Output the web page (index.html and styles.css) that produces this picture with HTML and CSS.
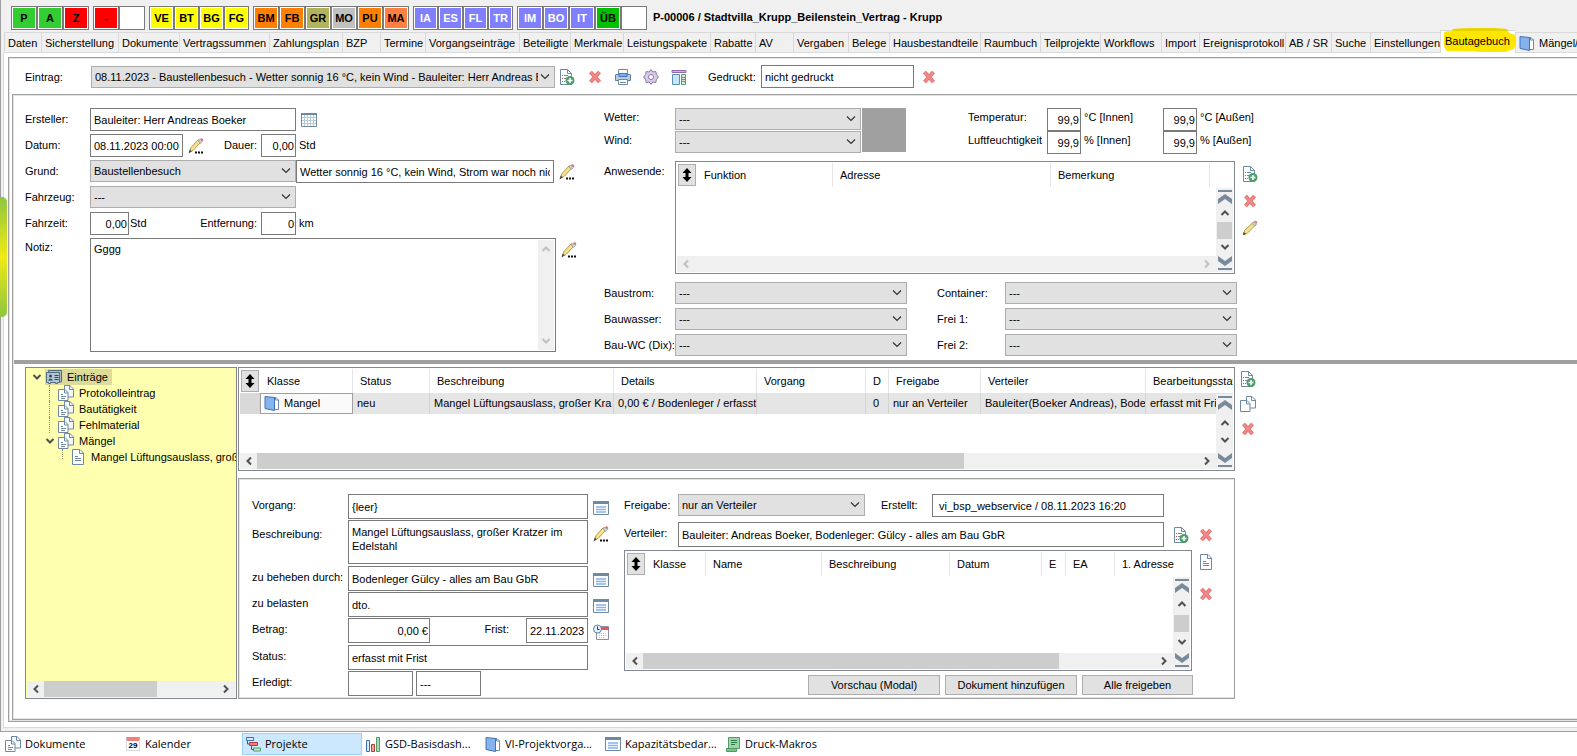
FILE: index.html
```html
<!DOCTYPE html>
<html lang="de">
<head>
    <meta charset="UTF-8">
    <meta name="viewport" content="width=device-width, initial-scale=1.0">
    <title>P-00006 / Bautagebuch</title>
    <link rel="stylesheet" href="styles.css">
</head>
<body>

<!-- Symbole -->
<svg class="sprite" aria-hidden="true">
    <symbol id="i-add" viewBox="0 0 16 16">
        <path d="M1.500 .5h7l4 4v11h-11z" fill="#fff" stroke="#6f8aa0"/>
        <path d="M8.500 .5v4h4" fill="none" stroke="#6f8aa0"/>
        <path d="M3 6.500h1M3 9.500h1M3 12.500h1" stroke="#c0504d"/>
        <path d="M5 6.500h4M5 9.500h2M5 12.500h1" stroke="#6f8aa0"/>
        <circle cx="11" cy="11.500" r="4.500" fill="#4e9e6c"/>
        <path d="M8.500 11.500h5M11 9v5" stroke="#fff" stroke-width="1.500"/>
    </symbol>
    <symbol id="i-del" viewBox="0 0 16 16">
        <path d="M3.500 3l9 10M12.500 3l-9 10" stroke="#e66f6f" stroke-width="4"/>
        <path d="M3.500 3l9 10M12.500 3l-9 10" stroke="#f08a88" stroke-width="2"/>
    </symbol>
    <symbol id="i-print" viewBox="0 0 16 16">
        <path d="M3.500 5V.5h9V5" fill="#fff" stroke="#6f8aa0"/>
        <path d="M1 5.500h14a.5.500 0 0 1 .5.500v5.500H.5V6a.5.500 0 0 1 .5-.5z" fill="#b9cbe0" stroke="#5f7f9f"/>
        <path d="M4 4.500h8v3H4z" fill="#7fb0ea" stroke="#4a76b8"/>
        <path d="M3.500 10.500h9v5h-9z" fill="#fff" stroke="#6f8aa0"/>
        <path d="M5 13.500h6" stroke="#6f8aa0"/>
    </symbol>
    <symbol id="i-gear" viewBox="0 0 16 16">
        <path d="M8 .6l1.800 2.400 3-.5.600 3L15.400 8l-2 2.500-.6 3-3-.5L8 15.400 6.200 13l-3 .5-.6-3L.6 8l2-2.500.6-3 3 .5z" fill="#d9cce8" stroke="#8d76aa"/>
        <circle cx="8" cy="8" r="2.500" fill="#fff" stroke="#8d76aa"/>
    </symbol>
    <symbol id="i-layout" viewBox="0 0 16 16">
        <path d="M1 1.500h14v2H1z" fill="#c9b8dc" stroke="#8d6ba8"/>
        <path d="M1.500 5.500h7v10h-7z" fill="#c5e6fb" stroke="#5b8fb5"/>
        <path d="M10.500 5.500h4v10h-4z" fill="#d4ecd9" stroke="#5c9e72"/>
        <path d="M11 8.500h3M11 10.500h3M11 12.500h3" stroke="#5c9e72"/>
    </symbol>
    <symbol id="i-grid" viewBox="0 0 16 16">
        <path d="M.5 1.500h15v13H.5z" fill="#fff" stroke="#6f8aa0"/>
        <path d="M0 2h16" stroke="#6f8aa0" stroke-width="2"/>
        <path d="M1 5.500h14M1 8.500h14M1 11.500h14M3.500 3v11M6.500 3v11M9.500 3v11M12.500 3v11" stroke="#b9cbd8"/>
    </symbol>
    <symbol id="i-pencil" viewBox="0 0 16 16">
        <path d="M1.500 14.500l1-4 9-8.500 2.500 2.500-9 9z" fill="#fbe08a" stroke="#a99a55"/>
        <path d="M10 3.500l2-2 2.500 2.500-2 2z" fill="#c3cad2" stroke="#8a929a" stroke-width=".6"/>
        <path d="M12 1.500q1.500-1.500 2.700-.3t.1 2.600z" fill="#e87070"/>
        <path d="M1 15l.8-3 2 2z" fill="#333"/>
    </symbol>
    <symbol id="i-pencil-dots" viewBox="0 0 16 16">
        <path d="M1.500 14l1.500-4.500 7.500-8L13 4l-8 8.500z" fill="#fbe08a" stroke="#a99a55"/>
        <path d="M10 3l2-2 2.500 2.500-2 2z" fill="#c3cad2" stroke="#8a929a" stroke-width=".6"/>
        <path d="M12 1q1.500-1.500 2.700-.3t.1 2.600z" fill="#e87070"/>
        <path d="M.5 15.500l1.200-4 2 2z" fill="#444"/>
        <path d="M7 13.500h2v2H7zM10 13.500h2v2h-2zM13 13.500h2v2h-2z" fill="#111"/>
    </symbol>
    <symbol id="i-book" viewBox="0 0 16 16">
        <path d="M8 2.500h4l2.500 2.500v9.500H8z" fill="#fff" stroke="#6f8aa0"/>
        <path d="M11.500 2.500V5h3" fill="none" stroke="#6f8aa0"/>
        <path d="M1 1.500l9.500 1v13L1 13.500z" fill="#86b2ee" stroke="#4472b4"/>
    </symbol>
    <symbol id="i-docs" viewBox="0 0 16 16">
        <path d="M6.500 .5h5.500l3.500 3.500v8h-9z" fill="#f3f8fd" stroke="#6f8aa0"/>
        <path d="M11.500 .5v4h4" fill="none" stroke="#6f8aa0"/>
        <path d="M.5 4.500H7l3 3v8H.5z" fill="#fff" stroke="#6f8aa0"/>
        <path d="M6.500 4.500v3.500H10M3 9.500h2M3 11.500h5M3 13.500h4" fill="none" stroke="#6f8aa0"/>
    </symbol>
    <symbol id="i-copy" viewBox="0 0 16 16">
        <path d="M6.500 .5h5.500l3.500 3.500v8h-9z" fill="#fff" stroke="#6f8aa0"/>
        <path d="M11.500 .5v4h4" fill="none" stroke="#6f8aa0"/>
        <path d="M.5 4.500H7l3 3v8H.5z" fill="#fff" stroke="#6f8aa0"/>
        <path d="M6.500 4.500v3.500H10" fill="none" stroke="#6f8aa0"/>
    </symbol>
    <symbol id="i-doc" viewBox="0 0 16 16">
        <path d="M2.500 .5H10l3.500 3.500v11.500h-11z" fill="#fff" stroke="#6f8aa0"/>
        <path d="M9.500 .5v4h4M5 7.500h3M5 9.500h6M5 11.500h6" fill="none" stroke="#6f8aa0"/>
    </symbol>
    <symbol id="i-contact" viewBox="0 0 16 16">
        <path d="M2.500 3V1.500h13V13H14" fill="#a9bccb" stroke="#4f6c84"/>
        <path d="M.5 3.500h13v10h-2v1h-2v-1h-5v1h-2v-1h-2z" fill="#b4c6d4" stroke="#4f6c84"/>
        <circle cx="4.500" cy="7" r="1.500" fill="#2f4a60"/>
        <path d="M2 11.500q2.500-4 5 0z" fill="#2f4a60"/>
        <path d="M8.500 6.500h4M8.500 8.500h4M8.500 10.500h4" stroke="#2f4a60"/>
    </symbol>
    <symbol id="i-form" viewBox="0 0 16 16">
        <path d="M.5 1.500h15v13H.5z" fill="#fff" stroke="#6f8aa0"/>
        <path d="M0 2.500h16" stroke="#6f8aa0" stroke-width="3"/>
        <path d="M3 7h10M3 9.500h10M3 12h10" stroke="#86b2ee" stroke-width="1.500"/>
    </symbol>
    <symbol id="i-due" viewBox="0 0 16 16">
        <path d="M3.500 2.500h12v13h-12z" fill="#fff" stroke="#8b8fa0"/>
        <path d="M8 3h8v3H8z" fill="#e05858"/>
        <path d="M6 9.500h8M6 11.500h8M6 13.500h6" stroke="#b6bccb" stroke-dasharray="1 1"/>
        <circle cx="4.500" cy="5" r="4" fill="#eaf2fc" stroke="#5b7fae"/>
        <path d="M4.500 2.500V5.500h2" fill="none" stroke="#333"/>
    </symbol>
    <symbol id="i-gantt" viewBox="0 0 16 16">
        <path d="M1.500 1.500h7v3h-7z" fill="#dbe8f8" stroke="#3c6eb4"/>
        <path d="M4.500 6.500h8v3h-8z" fill="#f08080" stroke="#b43c3c"/>
        <path d="M8.500 12h7v3h-7z" fill="#c4e6c8" stroke="#4e9e6c"/>
        <path d="M2.500 5v3h2M6.500 10v3.500h2" fill="none" stroke="#555"/>
    </symbol>
    <symbol id="i-bars" viewBox="0 0 16 16">
        <path d="M1.500 4.500h3v11h-3z" fill="#dbe8f8" stroke="#3c6eb4"/>
        <path d="M6.500 8.500h3v7h-3z" fill="#f6a0a0" stroke="#b43c3c"/>
        <path d="M11.500 1.500h3v14h-3z" fill="#a9dbb2" stroke="#4e9e6c"/>
    </symbol>
    <symbol id="i-macro" viewBox="0 0 16 16">
        <path d="M3.500 1.500h11v11h-11z" fill="#9fd3a8" stroke="#4e9e6c"/>
        <path d="M1.500 12.500h10v3h-10z" fill="#7cc08a" stroke="#4e9e6c"/>
        <path d="M6 4.500h6M6 6.500h6M6 8.500h4" stroke="#2f7a48"/>
    </symbol>
    <symbol id="i-sort" viewBox="0 0 10 16">
        <path d="M5 1l4.500 5h-3v4h3L5 15 .5 10h3V6h-3z" fill="#000"/>
    </symbol>
    <symbol id="i-up" viewBox="0 0 10 10"><path d="M1.500 7L5 3.500 8.500 7" fill="none" stroke="currentColor" stroke-width="2"/></symbol>
    <symbol id="i-down" viewBox="0 0 10 10"><path d="M1.500 3L5 6.500 8.500 3" fill="none" stroke="currentColor" stroke-width="2"/></symbol>
    <symbol id="i-left" viewBox="0 0 10 10"><path d="M7 1.500L3.500 5 7 8.500" fill="none" stroke="currentColor" stroke-width="2"/></symbol>
    <symbol id="i-right" viewBox="0 0 10 10"><path d="M3 1.500L6.500 5 3 8.500" fill="none" stroke="currentColor" stroke-width="2"/></symbol>
    <symbol id="i-first" viewBox="0 0 16 16">
        <path d="M1 1h14v2H1zM8 5l7 5v5l-7-5-7 5v-5z" fill="#7b8a9a"/>
    </symbol>
    <symbol id="i-last" viewBox="0 0 16 16">
        <path d="M1 13h14v2H1zM8 11l7-5V1L8 6 1 1v5z" fill="#7b8a9a"/>
    </symbol>
</svg>

<div class="window">
    <div class="edge-tab"></div>

    <header class="topbar">
        <div class="chips">
            <button class="chip green">P</button><button class="chip green">A</button><button class="chip red">Z</button>
        </div>
        <div class="chips">
            <button class="chip red">-</button><button class="chip" aria-label="leer"></button>
        </div>
        <div class="chips narrow">
            <button class="chip yellow">VE</button><button class="chip yellow">BT</button><button class="chip yellow">BG</button><button class="chip yellow">FG</button>
        </div>
        <div class="chips">
            <button class="chip orange">BM</button><button class="chip orange">FB</button><button class="chip olive">GR</button><button class="chip gray">MO</button><button class="chip orange">PU</button><button class="chip coral">MA</button>
        </div>
        <div class="chips narrow">
            <button class="chip blue">IA</button><button class="chip blue">ES</button><button class="chip blue">FL</button><button class="chip blue">TR</button>
        </div>
        <div class="chips">
            <button class="chip blue">IM</button><button class="chip blue">BO</button><button class="chip blue">IT</button><button class="chip darkgreen">ÜB</button><button class="chip" aria-label="leer"></button>
        </div>
        <h1 class="title">P-00006 / Stadtvilla_Krupp_Beilenstein_Vertrag - Krupp</h1>
    </header>

    <nav class="tabs">
        <a class="tab" href="#">Daten</a>
        <a class="tab" href="#">Sicherstellung</a>
        <a class="tab" href="#">Dokumente</a>
        <a class="tab" href="#">Vertragssummen</a>
        <a class="tab" href="#">Zahlungsplan</a>
        <a class="tab" href="#">BZP</a>
        <a class="tab" href="#">Termine</a>
        <a class="tab" href="#">Vorgangseinträge</a>
        <a class="tab" href="#">Beteiligte</a>
        <a class="tab" href="#">Merkmale</a>
        <a class="tab" href="#">Leistungspakete</a>
        <a class="tab" href="#">Rabatte</a>
        <a class="tab" href="#">AV</a>
        <a class="tab" href="#">Vergaben</a>
        <a class="tab" href="#">Belege</a>
        <a class="tab" href="#">Hausbestandteile</a>
        <a class="tab" href="#">Raumbuch</a>
        <a class="tab" href="#">Teilprojekte</a>
        <a class="tab" href="#">Workflows</a>
        <a class="tab" href="#">Import</a>
        <a class="tab" href="#">Ereignisprotokoll</a>
        <a class="tab" href="#">AB / SR</a>
        <a class="tab" href="#">Suche</a>
        <a class="tab" href="#">Einstellungen</a>
        <a class="tab active" href="#">
            <svg class="marker" viewBox="0 0 73 25" aria-hidden="true"><path d="M1 5Q1 3 9 3L10 1Q40-1 64 1L66 5 72 7Q74 14 71 21L62 24 40 24 24 23 4 23Q0 20 1 12z" fill="#ffe600"/><path d="M9 3L10 1Q40-1 64 1L65 3z" fill="#e6d300"/></svg>
            <span class="tab-text">Bautagebuch</span>
        </a>
        <a class="tab" href="#"><svg class="icon"><use href="#i-book"/></svg>Mängel/Fristen</a>
    </nav>

    <main class="page">
        <div class="frame outer">

            <!-- Eintragsauswahl -->
            <div class="entry-bar">
                <label class="entry-label" for="eintrag">Eintrag:</label>
                <select class="entry-select" id="eintrag"><option>08.11.2023 - Baustellenbesuch - Wetter sonnig 16 °C, kein Wind - Bauleiter: Herr Andreas B</option></select>
                <div class="entry-tools">
                    <button class="tool" aria-label="Neu"><svg class="icon"><use href="#i-add"/></svg></button>
                    <button class="tool" aria-label="Löschen"><svg class="icon"><use href="#i-del"/></svg></button>
                    <button class="tool" aria-label="Drucken"><svg class="icon"><use href="#i-print"/></svg></button>
                    <button class="tool" aria-label="Optionen"><svg class="icon"><use href="#i-gear"/></svg></button>
                    <button class="tool" aria-label="Ansicht"><svg class="icon"><use href="#i-layout"/></svg></button>
                </div>
                <label class="printed-label" for="gedruckt">Gedruckt:</label>
                <input class="printed" id="gedruckt" type="text" value="nicht gedruckt">
                <button class="tool" aria-label="Druck zurücksetzen"><svg class="icon"><use href="#i-del"/></svg></button>
            </div>

            <div class="frame inner">
                <div class="upper">

                    <div class="form">
                        <div class="row">
                            <label for="ersteller">Ersteller:</label>
                            <input class="w-main" id="ersteller" type="text" value="Bauleiter: Herr Andreas Boeker">
                            <button class="tool" aria-label="Auswahl"><svg class="icon"><use href="#i-grid"/></svg></button>
                        </div>
                        <div class="row">
                            <label for="datum">Datum:</label>
                            <input class="w-date" id="datum" type="text" value="08.11.2023 00:00">
                            <button class="tool" aria-label="Datum ändern"><svg class="icon"><use href="#i-pencil-dots"/></svg></button>
                            <label class="mid-label" for="dauer">Dauer:</label>
                            <input class="w-num right" id="dauer" type="text" value="0,00">
                            <span class="unit">Std</span>
                        </div>
                        <div class="row">
                            <label for="grund">Grund:</label>
                            <select class="w-main" id="grund"><option>Baustellenbesuch</option></select>
                            <input class="w-reason" type="text" aria-label="Grund Text" value="Wetter sonnig 16 °C, kein Wind, Strom war noch nicht">
                            <button class="tool" aria-label="Grund ändern"><svg class="icon"><use href="#i-pencil-dots"/></svg></button>
                        </div>
                        <div class="row">
                            <label for="fahrzeug">Fahrzeug:</label>
                            <select class="w-main" id="fahrzeug"><option>---</option></select>
                        </div>
                        <div class="row">
                            <label for="fahrzeit">Fahrzeit:</label>
                            <input class="w-time right" id="fahrzeit" type="text" value="0,00">
                            <span class="unit-near">Std</span>
                            <label class="mid-label" for="entfernung">Entfernung:</label>
                            <input class="w-num right" id="entfernung" type="text" value="0">
                            <span class="unit">km</span>
                        </div>
                        <div class="row note">
                            <label for="notiz">Notiz:</label>
                            <div class="note-box">
                                <textarea id="notiz">Gggg</textarea>
                                <div class="vscroll off">
                                    <svg class="arrow"><use href="#i-up"/></svg>
                                    <svg class="arrow"><use href="#i-down"/></svg>
                                </div>
                            </div>
                            <button class="tool" aria-label="Notiz ändern"><svg class="icon"><use href="#i-pencil-dots"/></svg></button>
                        </div>
                    </div>

                    <div class="site">
                        <div class="weather">
                            <div class="weather-grid">
                                <label for="wetter">Wetter:</label>
                                <select id="wetter"><option>---</option></select>
                                <label for="wind">Wind:</label>
                                <select id="wind"><option>---</option></select>
                            </div>
                            <div class="weather-pic"></div>
                            <div class="climate">
                                <span>Temperatur:</span>
                                <input class="right" id="t-in" type="text" value="99,9"><label for="t-in">°C [Innen]</label>
                                <input class="right" id="t-out" type="text" value="99,9"><label for="t-out">°C [Außen]</label>
                                <span>Luftfeuchtigkeit</span>
                                <input class="right" id="h-in" type="text" value="99,9"><label for="h-in">% [Innen]</label>
                                <input class="right" id="h-out" type="text" value="99,9"><label for="h-out">% [Außen]</label>
                            </div>
                        </div>

                        <div class="present">
                            <span class="present-label">Anwesende:</span>
                            <div class="list">
                                <table class="present-table">
                                    <thead>
                                        <tr>
                                            <th><button class="sort" aria-label="Sortieren"><svg><use href="#i-sort"/></svg></button></th>
                                            <th>Funktion</th><th>Adresse</th><th>Bemerkung</th><th></th>
                                        </tr>
                                    </thead>
                                </table>
                                <div class="vscroll">
                                    <svg class="icon"><use href="#i-first"/></svg>
                                    <svg class="arrow"><use href="#i-up"/></svg>
                                    <div class="vthumb"></div>
                                    <svg class="arrow"><use href="#i-down"/></svg>
                                    <svg class="icon"><use href="#i-last"/></svg>
                                </div>
                                <div class="hscroll off">
                                    <svg class="arrow"><use href="#i-left"/></svg>
                                    <svg class="arrow"><use href="#i-right"/></svg>
                                </div>
                            </div>
                            <div class="side">
                                <button class="tool" aria-label="Neu"><svg class="icon"><use href="#i-add"/></svg></button>
                                <button class="tool" aria-label="Löschen"><svg class="icon"><use href="#i-del"/></svg></button>
                                <button class="tool" aria-label="Ändern"><svg class="icon"><use href="#i-pencil"/></svg></button>
                            </div>
                        </div>

                        <div class="supply">
                            <label for="baustrom">Baustrom:</label>
                            <select id="baustrom"><option>---</option></select>
                            <label for="container">Container:</label>
                            <select id="container"><option>---</option></select>
                            <label for="bauwasser">Bauwasser:</label>
                            <select id="bauwasser"><option>---</option></select>
                            <label for="frei1">Frei 1:</label>
                            <select id="frei1"><option>---</option></select>
                            <label for="bauwc">Bau-WC (Dix):</label>
                            <select id="bauwc"><option>---</option></select>
                            <label for="frei2">Frei 2:</label>
                            <select id="frei2"><option>---</option></select>
                        </div>
                    </div>
                </div>

                <div class="splitter"></div>

                <div class="lower">
                    <!-- Baum -->
                    <div class="tree">
                        <ul class="nodes">
                            <li class="node">
                                <svg class="arrow"><use href="#i-down"/></svg>
                                <a class="node-link selected" href="#"><svg class="icon"><use href="#i-contact"/></svg>Einträge</a>
                            </li>
                            <li class="node child"><a class="node-link" href="#"><svg class="icon"><use href="#i-docs"/></svg>Protokolleintrag</a></li>
                            <li class="node child"><a class="node-link" href="#"><svg class="icon"><use href="#i-docs"/></svg>Bautätigkeit</a></li>
                            <li class="node child"><a class="node-link" href="#"><svg class="icon"><use href="#i-docs"/></svg>Fehlmaterial</a></li>
                            <li class="node open">
                                <svg class="arrow"><use href="#i-down"/></svg>
                                <a class="node-link" href="#"><svg class="icon"><use href="#i-docs"/></svg>Mängel</a>
                            </li>
                            <li class="node leaf"><a class="node-link" href="#"><svg class="icon"><use href="#i-doc"/></svg>Mangel Lüftungsauslass, großer Kratzer</a></li>
                        </ul>
                        <div class="hscroll">
                            <svg class="arrow"><use href="#i-left"/></svg>
                            <div class="track"><div class="hthumb tree-thumb"></div></div>
                            <svg class="arrow"><use href="#i-right"/></svg>
                        </div>
                    </div>

                    <div class="work">
                        <div class="list entries">
                            <table class="entries-table">
                                <thead>
                                    <tr>
                                        <th><button class="sort" aria-label="Sortieren"><svg><use href="#i-sort"/></svg></button></th>
                                        <th>Klasse</th><th>Status</th><th>Beschreibung</th><th>Details</th><th>Vorgang</th><th>D</th><th>Freigabe</th><th>Verteiler</th><th>Bearbeitungsstatus</th>
                                    </tr>
                                </thead>
                                <tbody>
                                    <tr>
                                        <td></td>
                                        <td class="focus"><div class="cell"><svg class="icon"><use href="#i-book"/></svg>Mangel</div></td>
                                        <td>neu</td>
                                        <td>Mangel Lüftungsauslass, großer Kra</td>
                                        <td>0,00 € / Bodenleger / erfasst</td>
                                        <td></td>
                                        <td>0</td>
                                        <td>nur an Verteiler</td>
                                        <td>Bauleiter(Boeker Andreas), Bode</td>
                                        <td>erfasst mit Fri</td>
                                    </tr>
                                </tbody>
                            </table>
                            <div class="vscroll">
                                <svg class="icon"><use href="#i-first"/></svg>
                                <svg class="arrow"><use href="#i-up"/></svg>
                                <svg class="arrow"><use href="#i-down"/></svg>
                                <svg class="icon"><use href="#i-last"/></svg>
                            </div>
                            <div class="hscroll">
                                <svg class="arrow"><use href="#i-left"/></svg>
                                <div class="track"><div class="hthumb"></div></div>
                                <svg class="arrow"><use href="#i-right"/></svg>
                            </div>
                        </div>

                        <!-- Detailansicht -->
                        <div class="frame detail">
                            <div class="detail-form">
                                <label for="vorgang">Vorgang:</label>
                                <input id="vorgang" type="text" value="{leer}">
                                <button class="tool" aria-label="Vorgang wählen"><svg class="icon"><use href="#i-form"/></svg></button>

                                <label class="text-label" for="beschreibung">Beschreibung:</label>
                                <textarea class="text" id="beschreibung">Mangel Lüftungsauslass, großer Kratzer im Edelstahl</textarea>
                                <button class="tool" aria-label="Beschreibung ändern"><svg class="icon"><use href="#i-pencil-dots"/></svg></button>

                                <label for="beheben">zu beheben durch:</label>
                                <input id="beheben" type="text" value="Bodenleger Gülcy - alles am Bau GbR">
                                <button class="tool" aria-label="Firma wählen"><svg class="icon"><use href="#i-form"/></svg></button>

                                <label for="belasten">zu belasten</label>
                                <input id="belasten" type="text" value="dto.">
                                <button class="tool" aria-label="Belasten wählen"><svg class="icon"><use href="#i-form"/></svg></button>

                                <label for="betrag">Betrag:</label>
                                <div class="split">
                                    <input class="w-amount right" id="betrag" type="text" value="0,00 €">
                                    <label class="due-label" for="frist">Frist:</label>
                                    <input class="w-due" id="frist" type="text" value="22.11.2023">
                                </div>
                                <button class="tool" aria-label="Frist wählen"><svg class="icon"><use href="#i-due"/></svg></button>

                                <label for="status">Status:</label>
                                <input id="status" type="text" value="erfasst mit Frist">
                                <span></span>

                                <label for="erledigt">Erledigt:</label>
                                <div class="split done">
                                    <input class="w-done" id="erledigt" type="text" value="">
                                    <input class="w-done" type="text" aria-label="Erledigt von" value="---">
                                </div>
                            </div>

                            <div class="release">
                                <div class="release-row">
                                    <label for="freigabe">Freigabe:</label>
                                    <select class="w-release" id="freigabe"><option>nur an Verteiler</option></select>
                                    <label class="created-label" for="erstellt">Erstellt:</label>
                                    <input class="created" id="erstellt" type="text" value="vi_bsp_webservice / 08.11.2023 16:20">
                                </div>
                                <div class="release-row">
                                    <label for="verteiler">Verteiler:</label>
                                    <input class="receivers" id="verteiler" type="text" value="Bauleiter: Andreas Boeker, Bodenleger: Gülcy - alles am Bau GbR">
                                    <button class="tool" aria-label="Verteiler hinzufügen"><svg class="icon"><use href="#i-add"/></svg></button>
                                    <button class="tool" aria-label="Verteiler löschen"><svg class="icon"><use href="#i-del"/></svg></button>
                                </div>
                                <div class="files">
                                    <div class="list">
                                        <table class="files-table">
                                            <thead>
                                                <tr>
                                                    <th><button class="sort" aria-label="Sortieren"><svg><use href="#i-sort"/></svg></button></th>
                                                    <th>Klasse</th><th>Name</th><th>Beschreibung</th><th>Datum</th><th>E</th><th>EA</th><th>1. Adresse</th>
                                                </tr>
                                            </thead>
                                        </table>
                                        <div class="vscroll">
                                            <svg class="icon"><use href="#i-first"/></svg>
                                            <svg class="arrow"><use href="#i-up"/></svg>
                                            <div class="vthumb"></div>
                                            <svg class="arrow"><use href="#i-down"/></svg>
                                            <svg class="icon"><use href="#i-last"/></svg>
                                        </div>
                                        <div class="hscroll">
                                            <svg class="arrow"><use href="#i-left"/></svg>
                                            <div class="track"><div class="hthumb files-thumb"></div></div>
                                            <svg class="arrow"><use href="#i-right"/></svg>
                                        </div>
                                    </div>
                                    <div class="side">
                                        <button class="tool" aria-label="Dokument"><svg class="icon"><use href="#i-doc"/></svg></button>
                                        <button class="tool" aria-label="Löschen"><svg class="icon"><use href="#i-del"/></svg></button>
                                    </div>
                                </div>
                                <div class="actions">
                                    <button class="btn">Vorschau (Modal)</button>
                                    <button class="btn">Dokument hinzufügen</button>
                                    <button class="btn last">Alle freigeben</button>
                                </div>
                            </div>
                        </div>
                    </div>

                    <div class="side work-side">
                        <button class="tool" aria-label="Neu"><svg class="icon"><use href="#i-add"/></svg></button>
                        <button class="tool" aria-label="Kopieren"><svg class="icon"><use href="#i-copy"/></svg></button>
                        <button class="tool" aria-label="Löschen"><svg class="icon"><use href="#i-del"/></svg></button>
                    </div>
                </div>
            </div>
        </div>
    </main>
</div>

<footer class="taskbar">
    <a class="task" href="#"><svg class="icon"><use href="#i-docs"/></svg>Dokumente</a>
    <a class="task" href="#"><span class="cal">29</span>Kalender</a>
    <a class="task current" href="#"><svg class="icon"><use href="#i-gantt"/></svg>Projekte</a>
    <a class="task" href="#"><svg class="icon"><use href="#i-bars"/></svg>GSD-Basisdash...</a>
    <a class="task" href="#"><svg class="icon"><use href="#i-book"/></svg>VI-Projektvorga...</a>
    <a class="task" href="#"><svg class="icon"><use href="#i-form"/></svg>Kapazitätsbedar...</a>
    <a class="task" href="#"><svg class="icon"><use href="#i-macro"/></svg>Druck-Makros</a>
</footer>

</body>
</html>
```
FILE: styles.css
```css
* {
    box-sizing: border-box;
}
body {
    margin: 0;
    min-height: 100vh;
    display: flex;
    flex-direction: column;
    overflow-x: hidden;
    background: #fff;
    color: #000;
    font: 11px/14px "Liberation Sans", Arial, sans-serif;
}
a {
    color: inherit;
    text-decoration: none;
}
label,
.unit,
.unit-near {
    line-height: 22px;
    white-space: nowrap;
}
button,
input,
select,
textarea {
    margin: 0;
    border-radius: 0;
    font: inherit;
    color: inherit;
}
input,
textarea {
    height: 23px;
    padding: 0 3px;
    border: 1px solid #7a7a7a;
    background: #fff;
    min-width: 0;
}
textarea {
    display: block;
    padding: 4px 3px;
    resize: none;
    overflow: hidden;
}
select {
    height: 22px;
    padding: 0 16px 0 3px;
    border: 1px solid #adadad;
    appearance: none;
    background: #e1e1e1 url("data:image/svg+xml,%3Csvg xmlns='http://www.w3.org/2000/svg' width='10' height='6'%3E%3Cpath d='M1 .5l4 4 4-4' fill='none' stroke='%23333' stroke-width='1.2'/%3E%3C/svg%3E") no-repeat right 4px center;
    text-overflow: clip;
}
.right {
    text-align: right;
    padding-right: 1px;
}
.sprite {
    position: absolute;
    width: 0;
    height: 0;
}
.icon {
    display: block;
    flex: none;
    width: 16px;
    height: 16px;
}
.arrow {
    display: block;
    flex: none;
    width: 10px;
    height: 10px;
    color: #505050;
}
.tool {
    flex: none;
    width: 16px;
    height: 16px;
    padding: 0;
    border: 0;
    background: none;
}

/* Fenster */
.window {
    position: relative;
    flex: 1;
    display: flex;
    flex-direction: column;
    padding: 6px 0 3px 2px;
    border-left: 1px solid #a0a0a0;
    border-bottom: 1px solid #a0a0a0;
    background: #f0f0f0;
}
.edge-tab {
    position: absolute;
    left: -1px;
    top: 197px;
    width: 7px;
    height: 120px;
    border-radius: 0 5px 5px 0;
    background: linear-gradient(#8cc63f, #f0ea14 50%, #8cc63f);
}

/* Kopfzeile */
.topbar {
    display: flex;
    gap: 4px;
    padding-left: 8px;
}
.chips {
    display: flex;
}
.chip {
    width: 26px;
    height: 24px;
    padding: 0 0 1px;
    border: 1px solid #7a7a7a;
    box-shadow: inset 0 0 0 1px #fff;
    background: #fff;
    font-weight: bold;
    text-align: center;
}
.narrow .chip {
    width: 25px;
}
.chip.green { background: #32cd32; }
.chip.red { background: #ff0000; }
.chip.yellow { background: #ffff00; }
.chip.orange { background: #ff8000; }
.chip.olive { background: #b3b35c; }
.chip.gray { background: #c0c0c0; }
.chip.coral { background: #ff8040; }
.chip.blue { background: #8080ff; color: #fff; }
.chip.darkgreen { background: #00c000; }
.title {
    margin: 0 0 0 2px;
    font-size: 11px;
    line-height: 23px;
}

/* Reiter */
.tabs {
    display: grid;
    grid-template-columns: 37px 77px 61px 90px 73px 38px 45px 94px 51px 53px 87px 45px 38px 55px 41px 91px 60px 60px 61px 38px 86px 46px 39px 70px 75px 120px;
    margin-top: 2px;
    padding-left: 1px;
}
.tab {
    display: flex;
    gap: 4px;
    height: 21px;
    padding-left: 3px;
    border: solid #d9d9d9;
    border-width: 1px 0 1px 1px;
    line-height: 21px;
    white-space: nowrap;
}
.tab .icon {
    margin-top: 2px;
}
.tab.active {
    position: relative;
    height: 23px;
    margin-top: -2px;
    padding-left: 4px;
    border-bottom: 0;
    background: #fff;
}
.tab-text {
    position: relative;
}
.marker {
    position: absolute;
    left: 2px;
    top: -3px;
    width: 73px;
    height: 25px;
}

.page {
    flex: 1;
    display: flex;
    padding: 4px 0 5px 4px;
    border: solid #dcdcdc;
    border-width: 0 0 1px 1px;
    background: #fff;
}
.frame {
    border: 1px solid #a0a0a0;
    box-shadow: inset 1px 1px 0 #e3e3e3, inset 0 -1px 0 #e3e3e3;
    padding: 1px;
}
.outer {
    flex: 1;
    display: flex;
    flex-direction: column;
    border-right: 0;
    padding-right: 0;
    min-width: 0;
}
.inner {
    flex: 1;
    display: flex;
    flex-direction: column;
    margin-left: 2px;
    border-right: 0;
    padding-right: 0;
}

/* Eintragsauswahl */
.entry-bar {
    display: flex;
    align-items: center;
    height: 35px;
    padding-left: 15px;
}
.entry-label {
    width: 66px;
}
.entry-select {
    width: 464px;
}
.entry-tools {
    display: flex;
    gap: 12px;
    margin-left: 4px;
}
.printed-label {
    width: 53px;
    margin-left: 21px;
}
.printed {
    width: 153px;
    margin-right: 7px;
}

/* Oberer Bereich */
.upper {
    display: flex;
    padding: 12px 0 4px 11px;
}
.form {
    flex: none;
    width: 579px;
}
.row {
    display: flex;
    height: 26px;
}
.row > label:first-child {
    width: 65px;
}
.row .tool {
    margin: 4px 0 0 5px;
}
.w-main { width: 206px; }
.w-date { width: 93px; }
.w-num { width: 35px; }
.w-time { width: 39px; }
.w-reason { width: 258px; }
.mid-label {
    margin-left: auto;
    padding-right: 4px;
}
.row .unit {
    width: 308px;
    padding-left: 3px;
}
.unit-near {
    padding-left: 1px;
}
.row.note {
    height: 114px;
}
.note label {
    line-height: 18px;
}
.note-box {
    display: flex;
    width: 466px;
    padding: 1px;
    border: 1px solid #7a7a7a;
}
.note-box textarea {
    flex: 1;
    height: 100%;
    padding: 2px;
    border: 0;
}

.site {
    flex: none;
    width: 660px;
}
.weather {
    display: flex;
    height: 53px;
}
.weather-grid {
    display: grid;
    grid-template: 23px 23px / 71px 186px;
}
.weather-grid label,
.climate label,
.climate span {
    line-height: 18px;
}
.weather-pic {
    width: 44px;
    height: 44px;
    margin: 0 62px 0 1px;
    background: #a0a0a0;
}
.climate {
    display: grid;
    grid-template: 23px 23px / 79px 34px 82px 34px auto;
}
.climate label {
    padding-left: 3px;
}
.present {
    display: flex;
    height: 121px;
}
.present-label {
    width: 71px;
    line-height: 20px;
}
.present .list {
    width: 560px;
    height: 113px;
}
.side {
    display: flex;
    flex-direction: column;
    gap: 11px;
    padding: 5px 0 0 7px;
}
.supply {
    display: grid;
    grid-template: 26px 26px 22px / 71px 232px 98px 232px;
}
.supply label:nth-of-type(even) {
    padding-left: 30px;
}
.splitter {
    height: 4px;
    background: #a0a0a0;
}

/* Listen */
.list {
    display: grid;
    grid-template: 25px 1fr 16px / 1fr 17px;
    padding: 1px;
    border: 1px solid #828790;
    background: #fff;
    overflow: hidden;
}
.list table {
    grid-area: 1 / 1 / 3 / 3;
    align-self: start;
    width: 100%;
    table-layout: fixed;
    border-collapse: separate;
    border-spacing: 0;
}
.list th,
.list td {
    padding: 0 0 0 7px;
    border-right: 1px solid #e5e5e5;
    font-weight: normal;
    text-align: left;
    white-space: nowrap;
    overflow: hidden;
}
.list th {
    height: 24px;
    padding-bottom: 1px;
}
.list th:first-child {
    padding: 0 0 0 1px;
    border: 0;
}
.list th:last-child,
.list td:last-child {
    border-right: 0;
}
.list td {
    height: 21px;
    padding: 0 0 2px 4px;
    border-color: #d4d4d4;
    background: #e5e5e5;
}
.list td:first-child {
    background: #d9d9d9;
}
.list .focus {
    padding: 0 0 0 3px;
    border: 1px solid #a0a0a0;
    background: #fafafa;
}
.cell {
    display: flex;
    gap: 4px;
    height: 17px;
    line-height: 16px;
}
.sort {
    display: flex;
    align-items: center;
    justify-content: center;
    width: 18px;
    height: 22px;
    padding: 0;
    border: 1px solid #adadad;
    background: #e1e1e1;
}
.sort svg {
    width: 10px;
    height: 16px;
}
.present-table th:nth-child(1) { width: 20px; }
.present-table th:nth-child(2) { width: 136px; }
.present-table th:nth-child(3) { width: 218px; }
.present-table th:nth-child(4) { width: 159px; }

.entries-table th:nth-child(1) { width: 20px; }
.entries-table th:nth-child(2) { width: 93px; }
.entries-table th:nth-child(3) { width: 77px; }
.entries-table th:nth-child(4) { width: 184px; }
.entries-table th:nth-child(5) { width: 143px; }
.entries-table th:nth-child(6) { width: 109px; }
.entries-table th:nth-child(7) { width: 23px; }
.entries-table th:nth-child(8) { width: 92px; }
.entries-table th:nth-child(9) { width: 165px; }
.entries-table td:nth-child(7) { padding-left: 7px; }

.files-table th:nth-child(1) { width: 20px; }
.files-table th:nth-child(2) { width: 60px; }
.files-table th:nth-child(3) { width: 116px; }
.files-table th:nth-child(4) { width: 128px; }
.files-table th:nth-child(5) { width: 92px; }
.files-table th:nth-child(6) { width: 24px; }
.files-table th:nth-child(7) { width: 49px; }

.vscroll {
    grid-area: 2 / 2 / 4 / 3;
    display: flex;
    flex-direction: column;
    align-items: center;
    justify-content: space-between;
    width: 17px;
    padding: 1px 0;
    background: #f0f0f0;
    z-index: 1;
}
.note-box .vscroll {
    width: 16px;
    padding: 4px 0;
}
.vthumb {
    width: 15px;
    height: 17px;
    background: #cdcdcd;
}
.hscroll {
    grid-area: 3 / 1 / 4 / 2;
    display: flex;
    align-items: center;
    justify-content: space-between;
    height: 16px;
    padding: 0 4px;
    background: #f0f0f0;
}
.off .arrow {
    color: #bfbfbf;
}
.track {
    flex: 1;
    height: 100%;
    margin: 0 3px;
}
.hthumb {
    width: 75%;
    height: 100%;
    background: #cdcdcd;
}
.files-thumb {
    width: 81%;
}
.tree-thumb {
    width: 65%;
}

/* Unterer Bereich */
.lower {
    flex: 1;
    display: flex;
    padding: 3px 0 19px 11px;
}
.tree {
    flex: none;
    display: flex;
    flex-direction: column;
    justify-content: space-between;
    width: 212px;
    padding: 1px;
    border: 1px solid #828790;
    background: #ffffb0;
    overflow: hidden;
}
.nodes {
    margin: 0;
    padding: 0 0 0 5px;
    list-style: none;
}
.node {
    display: flex;
    align-items: center;
    height: 16px;
    white-space: nowrap;
}
.node .arrow {
    margin-right: 3px;
}
.node-link {
    display: flex;
    gap: 5px;
    padding-right: 4px;
    line-height: 16px;
}
.selected {
    padding-left: 1px;
    background: #dcdb9a;
}
.open {
    padding-left: 13px;
}
.child {
    margin-left: 17px;
    padding-left: 8px;
    border-left: 1px dotted #909060;
}
.leaf {
    margin-left: 29px;
    padding-left: 8px;
}
.leaf .node-link {
    padding-left: 4px;
}
.leaf::before {
    content: "";
    align-self: flex-start;
    width: 4px;
    height: 9px;
    margin-left: -7px;
    margin-right: 3px;
    border: dotted #909060;
    border-width: 0 0 1px 1px;
}
.work {
    flex: 0 1 997px;
    display: flex;
    flex-direction: column;
    gap: 7px;
    margin-left: 1px;
    min-width: 0;
}
.entries {
    height: 104px;
}
.work-side {
    gap: 9px;
    padding: 4px 0 0 5px;
}

/* Detailansicht */
.detail {
    flex: 1;
    display: flex;
    gap: 20px;
    padding: 15px 0 0 13px;
}
.detail-form {
    display: grid;
    grid-template: 26px 46px 26px 26px 27px 26px 24px / 96px 240px 16px;
    align-content: start;
}
.detail-form input {
    height: 25px;
}
.detail-form .text {
    height: 44px;
}
.detail-form .text-label {
    line-height: 28px;
}
.detail-form .tool {
    margin: 6px 0 0 5px;
}
.split {
    display: flex;
    justify-content: space-between;
}
.w-amount { width: 82px; }
.w-due { width: 62px; }
.due-label {
    margin-left: auto;
    padding-right: 17px;
}
.done {
    justify-content: flex-start;
    gap: 3px;
}
.w-done { width: 65px; }

.release {
    flex: none;
    width: 592px;
}
.release-row {
    display: flex;
    height: 28px;
}
.release-row label:first-child {
    width: 54px;
}
.w-release {
    width: 187px;
}
.created-label {
    width: 51px;
    margin-left: 16px;
    flex: none;
}
.created {
    width: 232px;
    padding-left: 6px;
}
.receivers {
    width: 486px;
    height: 25px;
}
.release-row .tool {
    margin: 5px 0 0 9px;
}
.files {
    display: flex;
}
.files .list {
    width: 568px;
    height: 121px;
}
.files .side {
    gap: 16px;
    padding: 4px 0 0 6px;
}
.actions {
    display: flex;
    justify-content: flex-end;
    gap: 5px;
    width: 569px;
    margin-top: 4px;
}
.btn {
    width: 132px;
    height: 20px;
    padding: 0;
    border: 1px solid #adadad;
    background: #e1e1e1;
}
.btn.last {
    width: 111px;
}

/* Taskleiste */
.taskbar {
    display: flex;
    padding: 1px 0 1px 2px;
    background: #fff;
    font: 11px/20px "Open Sans", "Segoe UI", sans-serif;
}
.task {
    display: flex;
    align-items: center;
    gap: 4px;
    width: 120px;
    height: 22px;
    padding-left: 2px;
    border: 1px solid transparent;
    white-space: nowrap;
}
.current {
    border-color: #99d1ff;
    background: #cce8ff;
}
.cal {
    width: 14px;
    height: 14px;
    margin: 0 1px;
    border: 1px solid #d7dade;
    border-top: 4px solid #f08080;
    background: #fff;
    font: bold 8px/9px "Liberation Sans", Arial, sans-serif;
    text-align: center;
}
```
